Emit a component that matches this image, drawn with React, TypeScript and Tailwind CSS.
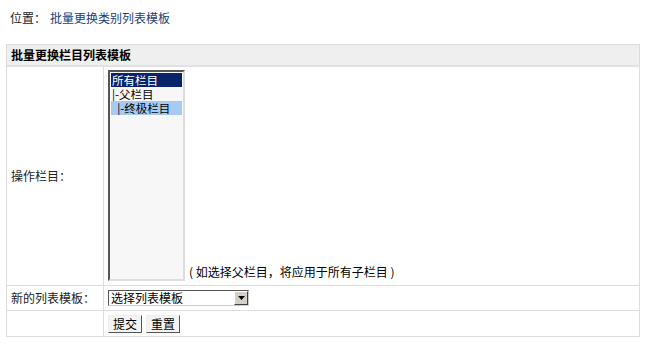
const font = { fontFamily: '"Noto Sans CJK SC", "Liberation Sans", sans-serif' };

export default function App() {
  const items = [
    { label: "所有栏目", cls: "bg-[#0a246a] text-white" },
    { label: "|-父栏目", cls: "text-black" },
    { label: "\u00a0\u00a0|-终极栏目", cls: "bg-[#a6caf0] text-black" },
  ];

  return (
    <div className="w-[650px] h-[360px] bg-white text-[12px] text-[#222] leading-[16px]" style={font}>
      {/* Location */}
      <div className="pt-[10px] pl-[10px] h-[44px]">
        <span>位置：</span>
        <a className="ml-[4px] text-[#1d3f72]">批量更换类别列表模板</a>
      </div>

      <div className="mx-[6px] w-[634px] border border-[#dddddd]">
        {/* Header */}
        <div className="h-[22px] bg-[#efefef] border-b-2 border-[#e2e2e2] pl-[4px] flex items-center font-bold text-black">
          批量更换栏目列表模板
        </div>

        {/* Column row */}
        <div className="flex border-b border-[#dddddd] h-[219px]">
          <div className="w-[97px] border-r border-[#dddddd] flex items-center pl-[4px]">操作栏目：</div>
          <div className="flex-1 flex items-end pl-[4px] pb-[4px]">
            <div className="w-[77px] h-[211px] border-2 border-t-[#555] border-l-[#555] border-b-[#ddd] border-r-[#ddd] bg-[#f7f7f7] p-[1px]">
              {items.map((it, i) => (
                <div key={i} className={`h-[14px] leading-[14px] text-[11.5px] pl-[1px] whitespace-pre overflow-hidden ${it.cls}`}>
                  {it.label}
                </div>
              ))}
            </div>
            <div className="ml-[4px] mb-[1px] text-black">( 如选择父栏目，将应用于所有子栏目 )</div>
          </div>
        </div>

        {/* Template row */}
        <div className="flex border-b border-[#dddddd] h-[25px]">
          <div className="w-[97px] border-r border-[#dddddd] flex items-center pl-[4px]">新的列表模板：</div>
          <div className="flex-1 flex items-center pl-[4px]">
            <div className="w-[141px] h-[16px] border border-t-[#555] border-l-[#555] border-b-[#ccc] border-r-[#ccc] bg-white flex items-center">
              <span className="flex-1 pl-[2px] text-black leading-[14px]">选择列表模板</span>
              <span className="w-[14px] h-[14px] bg-[#d4d0c8] border border-t-white border-l-white border-b-[#404040] border-r-[#404040] flex items-center justify-center">
                <svg width="7" height="4" viewBox="0 0 7 4">
                  <path d="M0 0h7L3.5 4z" fill="#000" />
                </svg>
              </span>
            </div>
          </div>
        </div>

        {/* Buttons row */}
        <div className="flex h-[25px]">
          <div className="w-[97px] border-r border-[#dddddd]" />
          <div className="flex-1 flex items-center pl-[4px] gap-[4px]">
            <button className="h-[18px] px-[4px] bg-[#f4f4f4] border border-t-[#eee] border-l-[#eee] border-b-[#555] border-r-[#555] text-black leading-[14px]">提交</button>
            <button className="h-[18px] px-[4px] bg-[#f4f4f4] border border-t-[#eee] border-l-[#eee] border-b-[#555] border-r-[#555] text-black leading-[14px]">重置</button>
          </div>
        </div>
      </div>
    </div>
  );
}
